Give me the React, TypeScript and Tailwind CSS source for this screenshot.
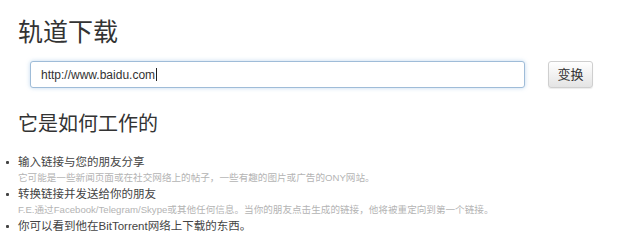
import React from 'react';

const font = { fontFamily: '"Liberation Sans", "Noto Sans CJK SC", sans-serif' };

function Item({ text, note }: { text: string; note?: string }) {
  return (
    <li>
      <div className="flex items-center h-[16px]">
        <span className="w-[18px] flex justify-start pl-[6px]">
          <span className="block w-[3px] h-[3px] bg-[#444] rounded-[1px]" />
        </span>
        <span className="text-[11.5px] text-[#444] leading-[16px]">{text}</span>
      </div>
      {note && (
        <div className="pl-[18px] text-[9.6px] text-[#b4b4b4] leading-[16px]">{note}</div>
      )}
    </li>
  );
}

export default function App() {
  return (
    <div className="w-[640px] h-[243px] bg-white overflow-hidden" style={font}>
      <div className="pt-[16px]">
        <h1 className="pl-[18px] text-[25px] leading-[32px] text-[#333] font-normal">轨道下载</h1>
        <div className="flex items-center mt-[13px] pl-[30px]">
          <div className="w-[495px] h-[27px] border border-[#9fbcd8] rounded-[3px] bg-white shadow-[0_0_4px_rgba(120,170,220,0.45)] flex items-center pl-[10px]">
            <span className="text-[12px] text-[#333]">http://www.baidu.com</span>
            <span className="w-px h-[13px] bg-[#222] ml-px" />
          </div>
          <button className="ml-[23px] w-[45px] h-[27px] border border-[#cfcfcf] rounded-[3px] bg-gradient-to-b from-white to-[#e4e4e4] text-[13px] text-[#333] shadow-[0_1px_1px_rgba(0,0,0,0.08)]">
            变换
          </button>
        </div>
        <h2 className="pl-[18px] mt-[22px] text-[20px] leading-[28px] text-[#333] font-normal">它是如何工作的</h2>
        <ul className="mt-[16px]">
          <Item text="输入链接与您的朋友分享" note="它可能是一些新闻页面或在社交网络上的帖子，一些有趣的图片或广告的ONY网站。" />
          <Item text="转换链接并发送给你的朋友" note="F.E.通过Facebook/Telegram/Skype或其他任何信息。当你的朋友点击生成的链接，他将被重定向到第一个链接。" />
          <Item text="你可以看到他在BitTorrent网络上下载的东西。" />
        </ul>
      </div>
    </div>
  );
}
